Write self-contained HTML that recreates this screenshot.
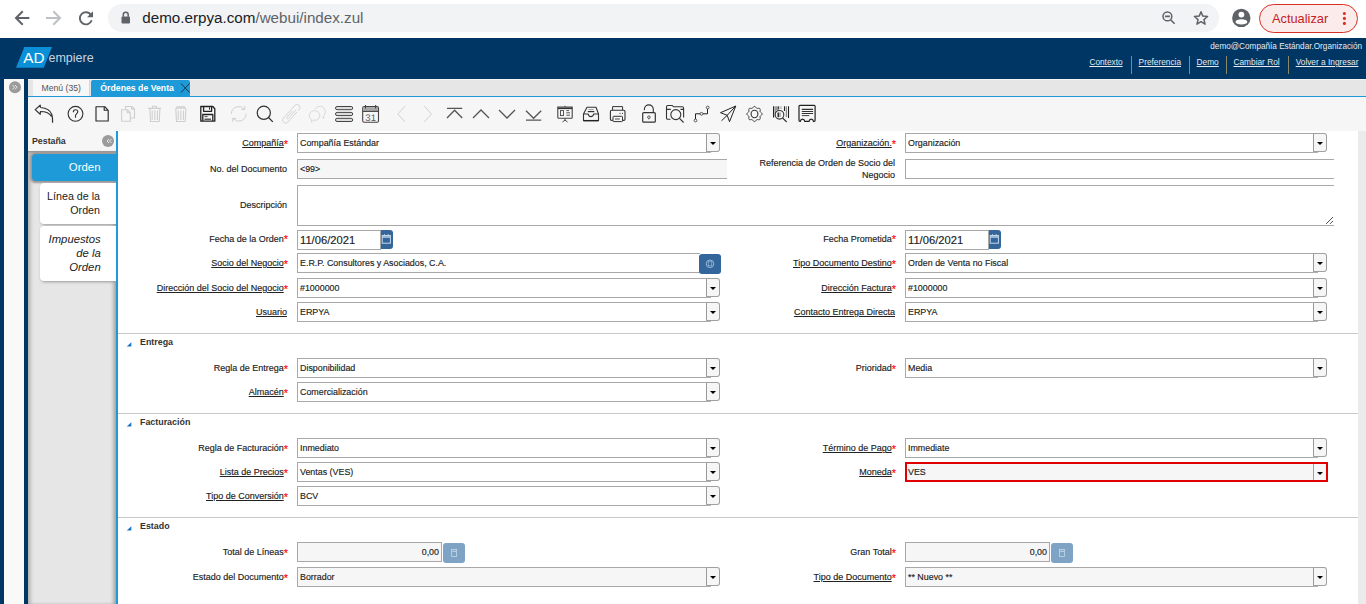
<!DOCTYPE html><html><head><meta charset="utf-8"><title>ADempiere</title><style>
*{margin:0;padding:0;box-sizing:border-box}
html,body{width:1366px;height:604px;overflow:hidden;background:#fff;font-family:"Liberation Sans", sans-serif;position:relative}
.a{position:absolute}
.t{position:absolute;white-space:nowrap;line-height:1}
.lbl{position:absolute;white-space:nowrap;font-size:9px;color:#222;text-align:right;line-height:20px}
.lbl u{text-decoration:underline;text-underline-offset:1px}
.req{color:#f00;font-size:11px;position:relative;top:1.5px;margin-left:0px;line-height:0}
.fld{position:absolute;border:1px solid #a8a8a8;background:#fff;height:20px;font-size:8.9px;color:#222;line-height:18px;padding-left:2px;white-space:nowrap;overflow:hidden}
.ro{background:#f6f6f6}
.btn{position:absolute;border:1px solid #a0a0a0;border-left:1px solid #9a9a9a;background:#f6f6f6;height:19px;border-radius:0 3px 3px 0}
.btn:after{content:"";position:absolute;left:3px;top:7.5px;border-left:3px solid transparent;border-right:3px solid transparent;border-top:3px solid #000}
.lbl,.fld{-webkit-text-stroke:0.15px currentColor}
.sec{position:absolute;left:118px;width:1240px;height:1px;background:#c8c8c8}
.sech{position:absolute;font-size:8.9px;font-weight:bold;color:#333;line-height:1;white-space:nowrap}
</style></head><body>
<div class="a" style="left:0;top:0;width:1366px;height:38px;background:#fff"></div>
<div class="a" style="left:108px;top:4px;width:1111px;height:28px;border-radius:14px;background:#f1f3f4"></div>
<div class="t" style="left:142.3px;top:7.6px;font-size:15.2px;line-height:20px;color:#202124">demo.erpya.com<span style="color:#5f6368">/webui/index.zul</span></div>
<div class="a" style="left:1259px;top:4px;width:99px;height:29px;border-radius:15px;background:#fbeceb;border:1px solid #d93025"></div>
<div class="t" style="left:1272px;top:10px;font-size:12.8px;line-height:18px;color:#c5221f">Actualizar</div>
<div class="a" style="left:0;top:38px;width:1366px;height:41px;background:#003663"></div>
<div class="t" style="left:48.5px;top:51px;font-size:12.5px;line-height:15px;color:#c8d4e0">empiere</div>
<div class="t" style="right:4px;top:41px;font-size:8.2px;line-height:11px;color:#e6ebf0">demo@Compañía Estándar.Organización</div>
<div class="t" style="left:1089.4px;top:57px;font-size:8.3px;line-height:11px;color:#e6ebf0;text-decoration:underline">Contexto</div>
<div class="t" style="left:1138.6px;top:57px;font-size:8.3px;line-height:11px;color:#e6ebf0;text-decoration:underline">Preferencia</div>
<div class="t" style="left:1196.6px;top:57px;font-size:8.3px;line-height:11px;color:#e6ebf0;text-decoration:underline">Demo</div>
<div class="t" style="left:1233.5px;top:57px;font-size:8.3px;line-height:11px;color:#e6ebf0;text-decoration:underline">Cambiar Rol</div>
<div class="t" style="left:1295.7px;top:57px;font-size:8.3px;line-height:11px;color:#e6ebf0;text-decoration:underline">Volver a Ingresar</div>
<div class="a" style="left:1131px;top:56px;width:1px;height:18px;background:#8d8769"></div>
<div class="a" style="left:1189px;top:56px;width:1px;height:18px;background:#8d8769"></div>
<div class="a" style="left:1226px;top:56px;width:1px;height:18px;background:#8d8769"></div>
<div class="a" style="left:1288px;top:56px;width:1px;height:18px;background:#8d8769"></div>
<div class="a" style="left:0;top:79px;width:28px;height:525px;background:#003663"></div>
<div class="a" style="left:4px;top:79px;width:20px;height:525px;background:#f9f9f8"></div>
<div class="a" style="left:28px;top:79px;width:1338px;height:18px;background:#e6e6e6;border-top:1px solid #f4f4f4"></div>
<div class="a" style="left:33px;top:80px;width:57px;height:16px;background:#f7f7f7;border-right:1px solid #d4d4d4"></div>
<div class="t" style="left:41.5px;top:82px;font-size:8.66px;line-height:12px;color:#555">Menú (35)</div>
<div class="a" style="left:91px;top:80px;width:99px;height:17px;background:#1e9ad8;border-radius:2px 2px 0 0"></div>
<div class="t" style="left:100.3px;top:82px;font-size:8.72px;line-height:12px;color:#fff;font-weight:bold">Órdenes de Venta</div>
<div class="a" style="left:28px;top:96px;width:1338px;height:1px;background:#1e9ad8"></div>
<div class="a" style="left:28px;top:97px;width:1338px;height:34px;background:#f6f6f6"></div>
<div class="a" style="left:28px;top:131px;width:88px;height:473px;background:#e6e6e6;box-shadow:inset 4px 0 4px -2px #a8a8a8, inset -4px 0 4px -2px #9a9694"></div>
<div class="a" style="left:28px;top:131px;width:88px;height:20px;background:#f6f6f6"></div>
<div class="a" style="left:28px;top:151px;width:88px;height:4px;background:linear-gradient(#8e8e8e,#b8b8b8 50%,rgba(200,200,200,0))"></div>
<div class="t" style="left:32px;top:136px;font-size:8.8px;line-height:10px;color:#333;font-weight:bold">Pestaña</div>
<div class="a" style="left:32px;top:154px;width:84px;height:27px;background:#1e9ad8;border-radius:4px 0 0 4px;box-shadow:0 0 2px 1.5px #9c9694"></div>
<div class="t" style="left:32px;top:160px;width:68.5px;text-align:right;font-size:11.4px;line-height:14px;color:#fff">Orden</div>
<div class="a" style="left:40px;top:183px;width:76px;height:41px;background:#fff;border-radius:4px 0 0 4px;box-shadow:1px 1px 3px #9a9a9a"></div>
<div class="t" style="left:40px;top:189px;width:60px;text-align:right;font-size:10.7px;line-height:14px;color:#222;white-space:normal">Línea de la<br>Orden</div>
<div class="a" style="left:40px;top:226px;width:76px;height:55px;background:#fff;border-radius:4px 0 0 4px;box-shadow:1px 1px 3px #9a9a9a"></div>
<div class="t" style="left:40px;top:232px;width:60.7px;text-align:right;font-size:11.3px;line-height:14px;color:#222;font-style:italic;white-space:normal">Impuestos<br>de la<br>Orden</div>
<div class="a" style="left:116px;top:131px;width:2px;height:473px;background:#1e9ad8"></div>
<div class="a" style="left:118px;top:131px;width:1240px;height:473px;background:#fff"></div>
<div class="a" style="left:1358px;top:131px;width:8px;height:473px;background:#ebebeb"></div>
<div class="lbl" style="right:1078px;top:133px;height:20px;line-height:20px"><span class="sy"><u>Compañía</u></span><span class="req">*</span></div>
<div class="fld" style="left:297px;top:133px;width:410px"><span class="sy">Compañía Estándar</span></div>
<div class="a" style="left:706px;top:152px;width:5px;height:1px;background:#b0b0b0"></div>
<div class="btn" style="left:706px;top:133px;width:14px"></div>
<div class="lbl" style="right:470px;top:133px;height:20px;line-height:20px"><span class="sy"><u>Organización.</u></span><span class="req">*</span></div>
<div class="fld" style="left:905px;top:133px;width:409px"><span class="sy">Organización</span></div>
<div class="a" style="left:1313px;top:152px;width:5px;height:1px;background:#b0b0b0"></div>
<div class="btn" style="left:1313px;top:133px;width:14px"></div>
<div class="lbl" style="right:1079px;top:159px;height:20px;line-height:20px"><span class="sy">No. del Documento</span></div>
<div class="fld ro" style="left:297px;top:159px;width:430px;border-right:none;"><span class="sy">&lt;99&gt;</span></div>
<div class="lbl" style="right:471px;top:157px;line-height:12px;text-align:right">Referencia de Orden de Socio del<br>Negocio</div>
<div class="fld" style="left:905px;top:159px;width:429px;border-right:none;"><span class="sy"></span></div>
<div class="lbl" style="right:1079px;top:185px;height:41px;line-height:41px"><span class="sy">Descripción</span></div>
<div class="fld" style="left:297px;top:185px;width:1037px;height:41px;border-right:none"></div>
<div class="lbl" style="right:1078px;top:228.5px;height:20px;line-height:20px"><span class="sy">Fecha de la Orden</span><span class="req">*</span></div>
<div class="fld" style="left:297px;top:230px;width:84px;font-size:11.2px;padding-left:2px">11/06/2021</div>
<div class="a" style="left:381px;top:230px;width:12px;height:19px;background:#33679c;border-radius:0 3px 3px 0"></div>
<div class="lbl" style="right:470px;top:228.5px;height:20px;line-height:20px"><span class="sy">Fecha Prometida</span><span class="req">*</span></div>
<div class="fld" style="left:905px;top:230px;width:84px;font-size:11.2px;padding-left:2px">11/06/2021</div>
<div class="a" style="left:989px;top:230px;width:12px;height:19px;background:#33679c;border-radius:0 3px 3px 0"></div>
<div class="lbl" style="right:1078px;top:253px;height:20px;line-height:20px"><span class="sy"><u>Socio del Negocio</u></span><span class="req">*</span></div>
<div class="fld" style="left:297px;top:253px;width:403px;border-right:none"><span class="sy">E.R.P. Consultores y Asociados, C.A.</span></div>
<div class="a" style="left:699px;top:254px;width:22px;height:20px;background:#33679c;border-radius:3px"></div>
<div class="lbl" style="right:470px;top:253px;height:20px;line-height:20px"><span class="sy"><u>Tipo Documento Destino</u></span><span class="req">*</span></div>
<div class="fld" style="left:905px;top:253px;width:409px"><span class="sy">Orden de Venta no Fiscal</span></div>
<div class="a" style="left:1313px;top:272px;width:5px;height:1px;background:#b0b0b0"></div>
<div class="btn" style="left:1313px;top:253px;width:14px"></div>
<div class="lbl" style="right:1078px;top:278px;height:20px;line-height:20px"><span class="sy"><u>Dirección del Socio del Negocio</u></span><span class="req">*</span></div>
<div class="fld" style="left:297px;top:278px;width:410px"><span class="sy">#1000000</span></div>
<div class="a" style="left:706px;top:297px;width:5px;height:1px;background:#b0b0b0"></div>
<div class="btn" style="left:706px;top:278px;width:14px"></div>
<div class="lbl" style="right:470px;top:278px;height:20px;line-height:20px"><span class="sy"><u>Dirección Factura</u></span><span class="req">*</span></div>
<div class="fld" style="left:905px;top:278px;width:409px"><span class="sy">#1000000</span></div>
<div class="a" style="left:1313px;top:297px;width:5px;height:1px;background:#b0b0b0"></div>
<div class="btn" style="left:1313px;top:278px;width:14px"></div>
<div class="lbl" style="right:1079px;top:302px;height:20px;line-height:20px"><span class="sy"><u>Usuario</u></span></div>
<div class="fld" style="left:297px;top:302px;width:410px"><span class="sy">ERPYA</span></div>
<div class="a" style="left:706px;top:321px;width:5px;height:1px;background:#b0b0b0"></div>
<div class="btn" style="left:706px;top:302px;width:14px"></div>
<div class="lbl" style="right:471px;top:302px;height:20px;line-height:20px"><span class="sy"><u>Contacto Entrega Directa</u></span></div>
<div class="fld" style="left:905px;top:302px;width:409px"><span class="sy">ERPYA</span></div>
<div class="a" style="left:1313px;top:321px;width:5px;height:1px;background:#b0b0b0"></div>
<div class="btn" style="left:1313px;top:302px;width:14px"></div>
<div class="sec" style="top:333px"></div>
<div class="sech" style="left:140px;top:338px">Entrega</div>
<svg class="a" style="left:126px;top:342px" width="6" height="6"><path d="M5.3,0.3 L5.3,4.6 L0.7,4.6 Z" fill="#1a78c8"/></svg>
<div class="lbl" style="right:1078px;top:358px;height:20px;line-height:20px"><span class="sy">Regla de Entrega</span><span class="req">*</span></div>
<div class="fld" style="left:297px;top:358px;width:410px"><span class="sy">Disponibilidad</span></div>
<div class="a" style="left:706px;top:377px;width:5px;height:1px;background:#b0b0b0"></div>
<div class="btn" style="left:706px;top:358px;width:14px"></div>
<div class="lbl" style="right:470px;top:358px;height:20px;line-height:20px"><span class="sy">Prioridad</span><span class="req">*</span></div>
<div class="fld" style="left:905px;top:358px;width:409px"><span class="sy">Media</span></div>
<div class="a" style="left:1313px;top:377px;width:5px;height:1px;background:#b0b0b0"></div>
<div class="btn" style="left:1313px;top:358px;width:14px"></div>
<div class="lbl" style="right:1078px;top:382px;height:20px;line-height:20px"><span class="sy"><u>Almacén</u></span><span class="req">*</span></div>
<div class="fld" style="left:297px;top:382px;width:410px"><span class="sy">Comercialización</span></div>
<div class="a" style="left:706px;top:401px;width:5px;height:1px;background:#b0b0b0"></div>
<div class="btn" style="left:706px;top:382px;width:14px"></div>
<div class="sec" style="top:413px"></div>
<div class="sech" style="left:140px;top:418px">Facturación</div>
<svg class="a" style="left:126px;top:422px" width="6" height="6"><path d="M5.3,0.3 L5.3,4.6 L0.7,4.6 Z" fill="#1a78c8"/></svg>
<div class="lbl" style="right:1078px;top:438px;height:20px;line-height:20px"><span class="sy">Regla de Facturación</span><span class="req">*</span></div>
<div class="fld" style="left:297px;top:438px;width:410px"><span class="sy">Inmediato</span></div>
<div class="a" style="left:706px;top:457px;width:5px;height:1px;background:#b0b0b0"></div>
<div class="btn" style="left:706px;top:438px;width:14px"></div>
<div class="lbl" style="right:470px;top:438px;height:20px;line-height:20px"><span class="sy"><u>Término de Pago</u></span><span class="req">*</span></div>
<div class="fld" style="left:905px;top:438px;width:409px"><span class="sy">Immediate</span></div>
<div class="a" style="left:1313px;top:457px;width:5px;height:1px;background:#b0b0b0"></div>
<div class="btn" style="left:1313px;top:438px;width:14px"></div>
<div class="lbl" style="right:1078px;top:462px;height:20px;line-height:20px"><span class="sy"><u>Lista de Precios</u></span><span class="req">*</span></div>
<div class="fld" style="left:297px;top:462px;width:410px"><span class="sy">Ventas (VES)</span></div>
<div class="a" style="left:706px;top:481px;width:5px;height:1px;background:#b0b0b0"></div>
<div class="btn" style="left:706px;top:462px;width:14px"></div>
<div class="lbl" style="right:470px;top:462px;height:20px;line-height:20px"><span class="sy"><u>Moneda</u></span><span class="req">*</span></div>
<div class="fld ro" style="left:905px;top:462px;width:423px;border:2px solid #e00000;line-height:16px;padding-left:1px"><span class="sy">VES</span></div>
<div class="btn" style="left:1313px;top:464px;width:13px;height:16px;border:none;border-left:1px solid #a0a0a0;border-radius:0"></div>
<div class="lbl" style="right:1078px;top:486px;height:20px;line-height:20px"><span class="sy"><u>Tipo de Conversión</u></span><span class="req">*</span></div>
<div class="fld" style="left:297px;top:486px;width:410px"><span class="sy">BCV</span></div>
<div class="a" style="left:706px;top:505px;width:5px;height:1px;background:#b0b0b0"></div>
<div class="btn" style="left:706px;top:486px;width:14px"></div>
<div class="sec" style="top:517px"></div>
<div class="sech" style="left:140px;top:522px">Estado</div>
<svg class="a" style="left:126px;top:526px" width="6" height="6"><path d="M5.3,0.3 L5.3,4.6 L0.7,4.6 Z" fill="#1a78c8"/></svg>
<div class="lbl" style="right:1078px;top:542px;height:20px;line-height:20px"><span class="sy">Total de Líneas</span><span class="req">*</span></div>
<div class="fld ro" style="left:297px;top:542px;width:145px;text-align:right;padding-right:2px"><span class="sy">0,00</span></div>
<div class="a" style="left:443px;top:543px;width:22px;height:20px;background:#7fa3c4;border-radius:3px"></div>
<div class="lbl" style="right:470px;top:542px;height:20px;line-height:20px"><span class="sy">Gran Total</span><span class="req">*</span></div>
<div class="fld ro" style="left:905px;top:542px;width:145px;text-align:right;padding-right:2px"><span class="sy">0,00</span></div>
<div class="a" style="left:1051px;top:543px;width:22px;height:20px;background:#7fa3c4;border-radius:3px"></div>
<div class="lbl" style="right:1078px;top:567px;height:20px;line-height:20px"><span class="sy">Estado del Documento</span><span class="req">*</span></div>
<div class="fld ro" style="left:297px;top:567px;width:410px"><span class="sy">Borrador</span></div>
<div class="a" style="left:706px;top:586px;width:5px;height:1px;background:#b0b0b0"></div>
<div class="btn" style="left:706px;top:567px;width:14px"></div>
<div class="lbl" style="right:470px;top:567px;height:20px;line-height:20px"><span class="sy"><u>Tipo de Documento</u></span><span class="req">*</span></div>
<div class="fld ro" style="left:905px;top:567px;width:409px"><span class="sy">** Nuevo **</span></div>
<div class="a" style="left:1313px;top:586px;width:5px;height:1px;background:#b0b0b0"></div>
<div class="btn" style="left:1313px;top:567px;width:14px"></div>
<svg class="a" style="left:0;top:0" width="1366" height="604" viewBox="0 0 1366 604"><path d="M28.3,18 H16.5 M22,12 L16,18 L22,24" fill="none" stroke="#5f6368" stroke-width="2" stroke-linecap="square"/><path d="M47,18 H59.5 M54,12 L60,18 L54,24" fill="none" stroke="#bdc1c6" stroke-width="2" stroke-linecap="square"/><path d="M91.2,15.2 A6.1,6.1 0 1 0 91.7,20.3" fill="none" stroke="#5f6368" stroke-width="1.9"/><path d="M93,11.3 V17.3 H87 Z" fill="#5f6368"/><rect x="121.5" y="16.5" width="8.5" height="7" rx="1" fill="#5f6368"/><path d="M123.3,16.8 V14.8 A2.45,2.45 0 0 1 128.2,14.8 V16.8" fill="none" stroke="#5f6368" stroke-width="1.5"/><circle cx="1167.4" cy="16.4" r="4.4" fill="none" stroke="#5f6368" stroke-width="1.5"/><path d="M1164.9,16.4 H1169.9 M1170.6,19.7 L1174.6,23.7" stroke="#5f6368" stroke-width="1.6" fill="none"/><path d="M1201.00,11.70 L1202.82,16.09 L1207.56,16.47 L1203.95,19.56 L1205.06,24.18 L1201.00,21.70 L1196.94,24.18 L1198.05,19.56 L1194.44,16.47 L1199.18,16.09 Z" fill="none" stroke="#5f6368" stroke-width="1.5" stroke-linejoin="round"/><circle cx="1241.3" cy="17.9" r="9.2" fill="#5f6368"/><circle cx="1241.4" cy="14.6" r="2.9" fill="#fff"/><ellipse cx="1241.4" cy="21.9" rx="5.9" ry="2.6" fill="#fff"/><circle cx="1344.4" cy="13.5" r="1.55" fill="#d93025"/><circle cx="1344.4" cy="18.4" r="1.55" fill="#d93025"/><circle cx="1344.4" cy="23.4" r="1.55" fill="#d93025"/><path d="M24.3,47 L52,47 L43.8,67.8 L16,67.8 Z" fill="#0b8fd7"/><text x="23.3" y="63" font-size="15.3" fill="#fff" font-family="Liberation Sans">AD</text><circle cx="15" cy="87.2" r="6" fill="#9b9b9b"/><path d="M12.5,85 L14.5,87.2 L12.5,89.4 M15,85 L17,87.2 L15,89.4" fill="none" stroke="#e8e8e8" stroke-width="1"/><path d="M181,83.5 L189.5,92.5 M189.5,83.5 L181,92.5" stroke="#1b3447" stroke-width="1"/><circle cx="108" cy="141" r="6" fill="#9b9b9b"/><path d="M109,139 L107,141 L109,143 M111.5,139 L109.5,141 L111.5,143" fill="none" stroke="#e8e8e8" stroke-width="1"/><path d="M40.5,107.5 C46,108 50.5,110.5 51.8,114.5 C52.6,117 52.7,120 52.6,122.8 M51.5,116.5 C49.5,113 45,111.5 40.5,111.5 L40.2,114.3 L35.2,109.6 L40.2,105.2 L40.5,107.5" fill="none" stroke="#333" stroke-width="1.2" stroke-linejoin="round"/><circle cx="75.5" cy="113.8" r="7.4" fill="none" stroke="#333" stroke-width="1.1"/><path d="M73.3,112.3 C73.3,110.4 74.3,109.8 75.6,109.8 C77,109.8 77.8,110.7 77.8,111.8 C77.8,113.3 75.5,114 75.5,115.8 V117.8" fill="none" stroke="#333" stroke-width="1.1"/><path d="M96,106.7 H104.8 L108.2,110.4 V121 H96 Z M104.2,107 V110.2 H108" fill="none" stroke="#2a2a2a" stroke-width="1.15" stroke-linejoin="round"/><path d="M125.5,109 V106.5 H132 L134.5,109 V118 H130.5 M131.5,106.8 V109.3 H134.3" fill="none" stroke="#cfcfcf" stroke-width="1.1"/><path d="M121.6,109.8 H127.5 L130.3,112.6 V121.3 H121.6 Z M127.3,110 V112.8 H130" fill="none" stroke="#cfcfcf" stroke-width="1.1"/><path d="M148,108.4 H161 M152.5,108.4 V106.2 H156.5 V108.4 M149.8,108.6 L150.5,121.5 H159.2 L159.9,108.6 M152.2,110.5 V120 M154.8,110.5 V120 M157.4,110.5 V120" fill="none" stroke="#cfcfcf" stroke-width="1.1"/><path d="M175.5,108.3 H186 M176.5,108.3 C176.5,106 180.8,106 180.8,108.3 C180.8,106 185,106 185,108.3 M175.8,108.5 L176.5,121.5 H185.2 L185.9,108.5 M178.2,110.5 V120 M180.8,110.5 V120 M183.4,110.5 V120" fill="none" stroke="#cfcfcf" stroke-width="1.1"/><path d="M200.8,106.5 H212.8 L214.8,108.8 V121.2 H200.8 Z M203.6,106.6 V111.3 H211.6 V106.6 M202.8,121 V114.5 H212.8 V121" fill="none" stroke="#222" stroke-width="1.3" stroke-linejoin="round"/><path d="M209.5,107.4 V109.6" stroke="#222" stroke-width="1"/><path d="M204.5,116.6 H207.6" stroke="#444" stroke-width="0.9"/><path d="M204.5,119.2 H211" stroke="#333" stroke-width="1.2"/><path d="M231.4,113.9 A7.3,7.3 0 0 1 244.3,109.2 M246,113.9 A7.3,7.3 0 0 1 233.1,118.6" fill="none" stroke="#d0d0d0" stroke-width="1"/><path d="M244.8,105.8 V109.5 H241.3 M232.6,122 V118.4 H236.1" fill="none" stroke="#d0d0d0" stroke-width="1"/><circle cx="263.8" cy="112.8" r="6.6" fill="none" stroke="#333" stroke-width="1.2"/><path d="M268.5,117.5 L272.8,121.9" stroke="#333" stroke-width="1.3"/><g transform="translate(291.3,113.8) rotate(42)" fill="none" stroke="#d2d2d2" stroke-width="0.9"><path d="M3,-5 V8.5 A3,3 0 0 1 -3,8.5 V-8.5 A3,3 0 0 1 3,-8.5 V-7"/><path d="M1,-6 V5.5 A1,1 0 0 1 -1,5.5 V-3"/></g><path d="M311.6,119.6 A5.3,4.9 0 1 1 313.4,120.3 L311.3,122 Z" fill="none" stroke="#d0d0d0" stroke-width="0.8"/><path d="M315,109 A5.1,5 0 0 1 324.6,114.3 C324.3,115.3 323.9,116 323.5,116.5 L324,118.2 L322.2,117.2" fill="none" stroke="#d0d0d0" stroke-width="0.8"/><rect x="335.5" y="106.5" width="17.2" height="3.2" rx="1.6" fill="#dcdcdc" stroke="#444" stroke-width="1"/><rect x="335.5" y="112.4" width="17.2" height="3.2" rx="1.6" fill="#dcdcdc" stroke="#444" stroke-width="1"/><rect x="335.5" y="118.3" width="17.2" height="3.2" rx="1.6" fill="#dcdcdc" stroke="#444" stroke-width="1"/><rect x="362.7" y="106.6" width="15.8" height="15.6" rx="1.5" fill="none" stroke="#444" stroke-width="1.1"/><rect x="363.2" y="107.1" width="14.8" height="4" fill="#a8a8a8"/><path d="M362.7,111.4 H378.5" stroke="#444" stroke-width="1.1"/><path d="M365.5,105 V108.5 M375.6,105 V108.5" stroke="#444" stroke-width="1.1"/><text x="370.7" y="120.6" font-size="9.6" text-anchor="middle" fill="#5a5a5a" font-family="Liberation Sans" style="text-rendering:geometricPrecision">31</text><path d="M405,106.2 L397.8,114 L405,121.8 M424.3,106.2 L431.5,114 L424.3,121.8" fill="none" stroke="#d0d0d0" stroke-width="1"/><path d="M447,108.4 H462.2 M447,118 L454.6,110.3 L462.2,118" fill="none" stroke="#555" stroke-width="1.3"/><path d="M473,118 L481,110 L489,118" fill="none" stroke="#555" stroke-width="1.3"/><path d="M499,110 L507,118 L515,110" fill="none" stroke="#555" stroke-width="1.3"/><path d="M526,110.8 L533.6,118.3 L541.2,110.8 M526,120.2 H541.2" fill="none" stroke="#555" stroke-width="1.3"/><path d="M557.8,107 H572.2 V117.8 Q572.2,118.3 571.5,118.3 H558.5 Q557.8,118.3 557.8,117.6 Z" fill="none" stroke="#444" stroke-width="1.1"/><path d="M557.8,108.3 H572.2" stroke="#333" stroke-width="1.6"/><path d="M565,105.8 V106.8" stroke="#333" stroke-width="1"/><rect x="560.5" y="110.6" width="3" height="5" fill="none" stroke="#444" stroke-width="0.9"/><path d="M566.3,110.6 H569 M566.3,112.8 H570 M566.3,115.2 H570" stroke="#444" stroke-width="0.9"/><path d="M565,118.3 V120 L562.5,122 M565,120 L567.5,122" fill="none" stroke="#444" stroke-width="1"/><path d="M587,107.2 H596 L598.5,114 V120.6 H583.5 V114 Z M583.5,114 H588.2 C588.5,117.5 593.3,117.5 593.6,114 H598.5" fill="none" stroke="#333" stroke-width="1.1" stroke-linejoin="round"/><path d="M588.5,109.6 H593.8" stroke="#888" stroke-width="0.8"/><path d="M587.8,111.6 H594.3" stroke="#333" stroke-width="1.2"/><path d="M583.5,120.6 H598.5" stroke="#222" stroke-width="1.3"/><path d="M612.6,110.2 V106.6 H622.6 V110.2" fill="none" stroke="#333" stroke-width="1"/><path d="M612.8,120.4 H611.6 Q610.4,120.4 610.4,119.2 V111.5 Q610.4,110.3 611.6,110.3 H623.7 Q625,110.3 625,111.5 V119.2 Q625,120.4 623.7,120.4 H622.5" fill="none" stroke="#333" stroke-width="1.1"/><rect x="613" y="116.3" width="9.5" height="5.3" rx="0.8" fill="none" stroke="#333" stroke-width="1"/><path d="M615,119 H619.8" stroke="#333" stroke-width="0.9"/><circle cx="620" cy="113.3" r="0.6" fill="#333"/><circle cx="622.5" cy="113.3" r="0.6" fill="#333"/><rect x="642.7" y="112.6" width="12.6" height="9.6" rx="1" fill="none" stroke="#333" stroke-width="1.2"/><path d="M644.4,110.3 V109.3 A4.3,4.3 0 0 1 653.3,109.3 V112.5" fill="none" stroke="#333" stroke-width="1.1"/><circle cx="648.9" cy="117.2" r="1.3" fill="none" stroke="#444" stroke-width="0.9"/><path d="M648.9,118.4 V119.3" stroke="#444" stroke-width="0.9"/><path d="M670.5,119.3 H667.8 Q666.5,119.3 666.5,118 V106.8 Q666.5,105.5 667.8,105.5 H672.3 L673.5,106.8 H682.3 Q683.6,106.8 683.6,108.1 V117.5 M666.5,109.4 H670.8 M680.5,109.4 H683.6" fill="none" stroke="#333" stroke-width="1.1"/><circle cx="675.8" cy="114.6" r="5" fill="none" stroke="#333" stroke-width="1.1"/><path d="M679.5,118.3 L683.6,122.5" stroke="#333" stroke-width="1.1"/><path d="M695.5,119 V113.8 H700 M703,113.8 H707.5 V109" fill="none" stroke="#222" stroke-width="1"/><circle cx="695.5" cy="120.5" r="1.4" fill="none" stroke="#333" stroke-width="0.8"/><circle cx="701.5" cy="113.8" r="1.4" fill="none" stroke="#333" stroke-width="0.8"/><circle cx="707.7" cy="107.5" r="1.4" fill="none" stroke="#333" stroke-width="0.8"/><path d="M735.8,106 L720.5,112.7 L727.2,115.3 L729.5,121.7 Z M735.8,106 L727.2,115.3 L721.5,120.8" fill="none" stroke="#222" stroke-width="1" stroke-linejoin="round"/><path d="M762.10,114.00 L762.06,114.30 L761.93,114.59 L761.74,114.86 L761.49,115.11 L761.22,115.34 L760.94,115.54 L760.67,115.74 L760.44,115.93 L760.26,116.12 L760.14,116.33 L760.07,116.57 L760.06,116.83 L760.09,117.13 L760.14,117.46 L760.20,117.81 L760.23,118.16 L760.23,118.51 L760.17,118.84 L760.05,119.13 L759.87,119.37 L759.63,119.55 L759.34,119.67 L759.01,119.73 L758.66,119.73 L758.31,119.70 L757.96,119.64 L757.63,119.59 L757.33,119.56 L757.07,119.57 L756.83,119.64 L756.62,119.76 L756.43,119.94 L756.24,120.17 L756.04,120.44 L755.84,120.72 L755.61,120.99 L755.36,121.24 L755.09,121.43 L754.80,121.56 L754.50,121.60 L754.20,121.56 L753.91,121.43 L753.64,121.24 L753.39,120.99 L753.16,120.72 L752.96,120.44 L752.76,120.17 L752.57,119.94 L752.38,119.76 L752.17,119.64 L751.93,119.57 L751.67,119.56 L751.37,119.59 L751.04,119.64 L750.69,119.70 L750.34,119.73 L749.99,119.73 L749.66,119.67 L749.37,119.55 L749.13,119.37 L748.95,119.13 L748.83,118.84 L748.77,118.51 L748.77,118.16 L748.80,117.81 L748.86,117.46 L748.91,117.13 L748.94,116.83 L748.93,116.57 L748.86,116.33 L748.74,116.12 L748.56,115.93 L748.33,115.74 L748.06,115.54 L747.78,115.34 L747.51,115.11 L747.26,114.86 L747.07,114.59 L746.94,114.30 L746.90,114.00 L746.94,113.70 L747.07,113.41 L747.26,113.14 L747.51,112.89 L747.78,112.66 L748.06,112.46 L748.33,112.26 L748.56,112.07 L748.74,111.88 L748.86,111.67 L748.93,111.43 L748.94,111.17 L748.91,110.87 L748.86,110.54 L748.80,110.19 L748.77,109.84 L748.77,109.49 L748.83,109.16 L748.95,108.87 L749.13,108.63 L749.37,108.45 L749.66,108.33 L749.99,108.27 L750.34,108.27 L750.69,108.30 L751.04,108.36 L751.37,108.41 L751.67,108.44 L751.93,108.43 L752.17,108.36 L752.38,108.24 L752.57,108.06 L752.76,107.83 L752.96,107.56 L753.16,107.28 L753.39,107.01 L753.64,106.76 L753.91,106.57 L754.20,106.44 L754.50,106.40 L754.80,106.44 L755.09,106.57 L755.36,106.76 L755.61,107.01 L755.84,107.28 L756.04,107.56 L756.24,107.83 L756.43,108.06 L756.62,108.24 L756.83,108.36 L757.07,108.43 L757.33,108.44 L757.63,108.41 L757.96,108.36 L758.31,108.30 L758.66,108.27 L759.01,108.27 L759.34,108.33 L759.63,108.45 L759.87,108.63 L760.05,108.87 L760.17,109.16 L760.23,109.49 L760.23,109.84 L760.20,110.19 L760.14,110.54 L760.09,110.87 L760.06,111.17 L760.07,111.43 L760.14,111.67 L760.26,111.88 L760.44,112.07 L760.67,112.26 L760.94,112.46 L761.22,112.66 L761.49,112.89 L761.74,113.14 L761.93,113.41 L762.06,113.70 Z" fill="none" stroke="#333" stroke-width="1"/><ellipse cx="754.5" cy="114" rx="3.4" ry="3.7" fill="none" stroke="#333" stroke-width="1.1"/><g stroke="#222"><path d="M773.6,106.3 V117.5" stroke-width="1.2"/><path d="M775.3,106.3 V113" stroke-width="0.8" stroke="#666"/><path d="M777,106.3 V110.5" stroke-width="0.9"/><path d="M778.7,106.3 V109.5" stroke-width="1"/><path d="M781,106.3 V109" stroke-width="0.8" stroke="#888"/><path d="M784.5,106.3 V111" stroke-width="1.1"/><path d="M786.3,106.3 V117" stroke-width="0.9" stroke="#666"/><path d="M788.5,106.3 V118" stroke-width="1.1"/></g><circle cx="779.5" cy="114.8" r="4.3" fill="#f6f6f6" stroke="#333" stroke-width="1.1"/><path d="M778.2,112.4 V117.2" stroke="#111" stroke-width="1.3"/><path d="M780,112.6 V117" stroke="#888" stroke-width="1.2"/><path d="M782.6,118 L786.7,122" stroke="#333" stroke-width="1.1"/><path d="M799,120.3 V106.3 Q799,105.4 799.9,105.4 H814.2 Q815.1,105.4 815.1,106.3 V120.3 Q815.1,121.3 814.2,121.3 H813.5 C813,118.5 809.5,118.5 809,121.3 H804.8 C804.3,118.5 800.8,118.5 800.3,121.3 H799.9 Q799,121.3 799,120.3 Z" fill="none" stroke="#222" stroke-width="1.2"/><path d="M801.8,109.4 H813.1 M801.8,111.5 H813.1 M801.8,113.5 H813.1" stroke="#333" stroke-width="1.1"/><path d="M801.8,115.6 H809.3" stroke="#444" stroke-width="1"/><path d="M1326.4,223.6 L1332.7,217.3 M1330.3,223.6 L1332.7,221.2" stroke="#444" stroke-width="0.95" stroke-linecap="round"/><rect x="382.2" y="235.5" width="8.2" height="7.7" fill="none" stroke="#c4d8ec" stroke-width="1"/><path d="M382.2,237 H390.4" stroke="#c4d8ec" stroke-width="1.4"/><path d="M384.5,234 V236 M388.2,234 V236" stroke="#c4d8ec" stroke-width="0.8"/><rect x="990.2" y="235.5" width="8.2" height="7.7" fill="none" stroke="#c4d8ec" stroke-width="1"/><path d="M990.2,237 H998.4" stroke="#c4d8ec" stroke-width="1.4"/><path d="M992.5,234 V236 M996.2,234 V236" stroke="#c4d8ec" stroke-width="0.8"/><circle cx="710" cy="263.8" r="3.8" fill="none" stroke="#9fc0de" stroke-width="0.9"/><rect x="708.2" y="261.8" width="3.6" height="4" fill="none" stroke="#9fc0de" stroke-width="0.7"/><rect x="451.6" y="549.6" width="5" height="6.8" fill="none" stroke="#c8d8e8" stroke-width="0.8"/><path d="M452.2,551.3 H456" stroke="#c8d8e8" stroke-width="1"/><rect x="1059.6" y="549.6" width="5" height="6.8" fill="none" stroke="#c8d8e8" stroke-width="0.8"/><path d="M1060.2,551.3 H1064" stroke="#c8d8e8" stroke-width="1"/></svg>
</body></html>
